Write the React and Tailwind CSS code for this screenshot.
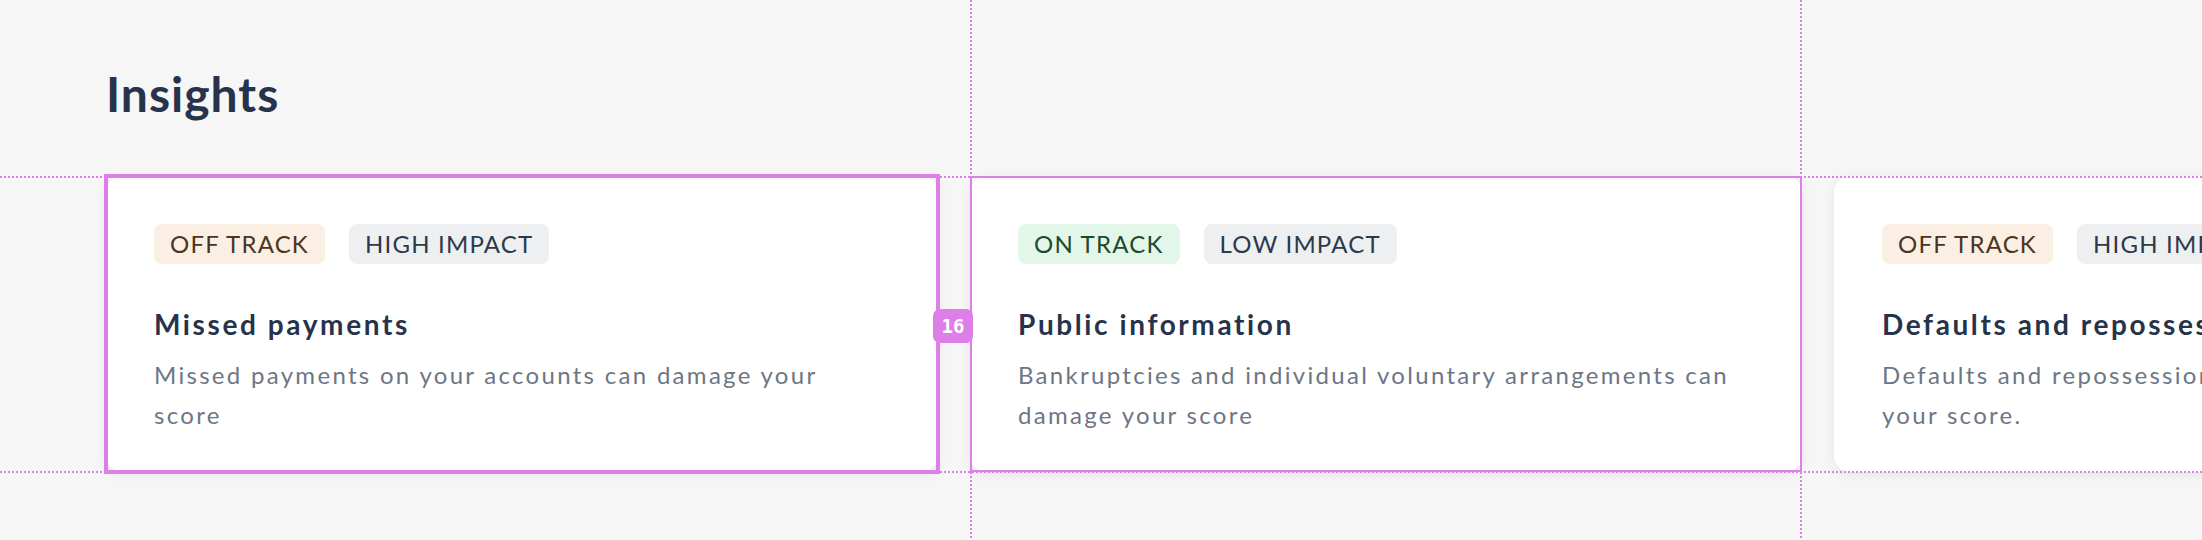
import React from 'react';

const insights = [
  {
    status: 'OFF TRACK',
    impact: 'HIGH IMPACT',
    onTrack: false,
    title: 'Missed payments',
    body: 'Missed payments on your accounts can damage your score',
  },
  {
    status: 'ON TRACK',
    impact: 'LOW IMPACT',
    onTrack: true,
    title: 'Public information',
    body: 'Bankruptcies and individual voluntary arrangements can damage your score',
  },
  {
    status: 'OFF TRACK',
    impact: 'HIGH IMPACT',
    onTrack: false,
    title: 'Defaults and repossessions',
    body: 'Defaults and repossessions have a negative impact on your score.',
  },
];

function Badge({ children, className }) {
  return (
    <span className={`inline-flex items-center h-[40px] px-[16px] rounded-[8px] text-[24px] leading-[40px] tracking-[0.05em] ${className}`}>
      {children}
    </span>
  );
}

function InsightCard({ item, outline }) {
  return (
    <div className="relative shrink-0 w-[832px] h-[296px] bg-white rounded-[16px] shadow-[0_2px_12px_rgba(0,0,0,0.08)] pl-[48px] pr-[58px] pt-[48px]">
      <div className="flex gap-[24px]">
        <Badge className={item.onTrack ? 'bg-[#e3f6ea] text-[#1e4a2c]' : 'bg-[#fbefe4] text-[#4b3522]'}>
          {item.status}
        </Badge>
        <Badge className="bg-[#eeeff1] text-[#2b3a4c]">{item.impact}</Badge>
      </div>
      <h3 className="mt-[40px] text-[28px] leading-[40px] font-bold tracking-[2.6px] text-[#26334a] whitespace-nowrap">
        {item.title}
      </h3>
      <p className="mt-[11px] text-[24px] leading-[40px] tracking-[2.3px] text-[#6d7685]">{item.body}</p>

      {/* measure overlay outlines */}
      {outline === 'thick' && (
        <div className="absolute -inset-[2px] border-[4px] border-[#de7ee8] pointer-events-none" />
      )}
      {outline === 'thin' && (
        <div className="absolute inset-0 border-[2px] border-[#de7ee8] pointer-events-none" />
      )}
    </div>
  );
}

export default function App() {
  return (
    <div
      className="relative w-[2202px] h-[540px] overflow-hidden bg-[#f6f6f6] text-[#26334a]"
      style={{ fontFamily: 'Lato, "Noto Sans", sans-serif' }}
    >
      <div className="pl-[106px] pt-[66px]">
        <h1 className="text-[48px] leading-[56px] font-bold tracking-[1px] text-[#26334a]">Insights</h1>
        <div className="flex gap-[32px] mt-[54px]">
          {insights.map((item, i) => (
            <InsightCard key={item.title} item={item} outline={i === 0 ? 'thick' : i === 1 ? 'thin' : null} />
          ))}
        </div>
      </div>

      {/* dotted guide lines */}
      <div className="absolute left-0 right-0 top-[176px] h-[2px] bg-[repeating-linear-gradient(90deg,#de7ee8_0_2px,transparent_2px_4px)]" />
      <div className="absolute left-0 right-0 top-[471px] h-[2px] bg-[repeating-linear-gradient(90deg,#de7ee8_0_2px,transparent_2px_4px)]" />
      <div className="absolute top-0 bottom-0 left-[970px] w-[2px] bg-[repeating-linear-gradient(180deg,#de7ee8_0_2px,transparent_2px_4px)]" />
      <div className="absolute top-0 bottom-0 left-[1800px] w-[2px] bg-[repeating-linear-gradient(180deg,#de7ee8_0_2px,transparent_2px_4px)]" />

      {/* gap label */}
      <div
        className="absolute left-[933px] top-[309px] w-[40px] h-[34px] rounded-[7px] bg-[#de7ee8] flex items-center justify-center text-white text-[19px] font-bold"
        style={{ fontFamily: '"DejaVu Sans Mono", monospace' }}
      >
        16
      </div>
    </div>
  );
}
